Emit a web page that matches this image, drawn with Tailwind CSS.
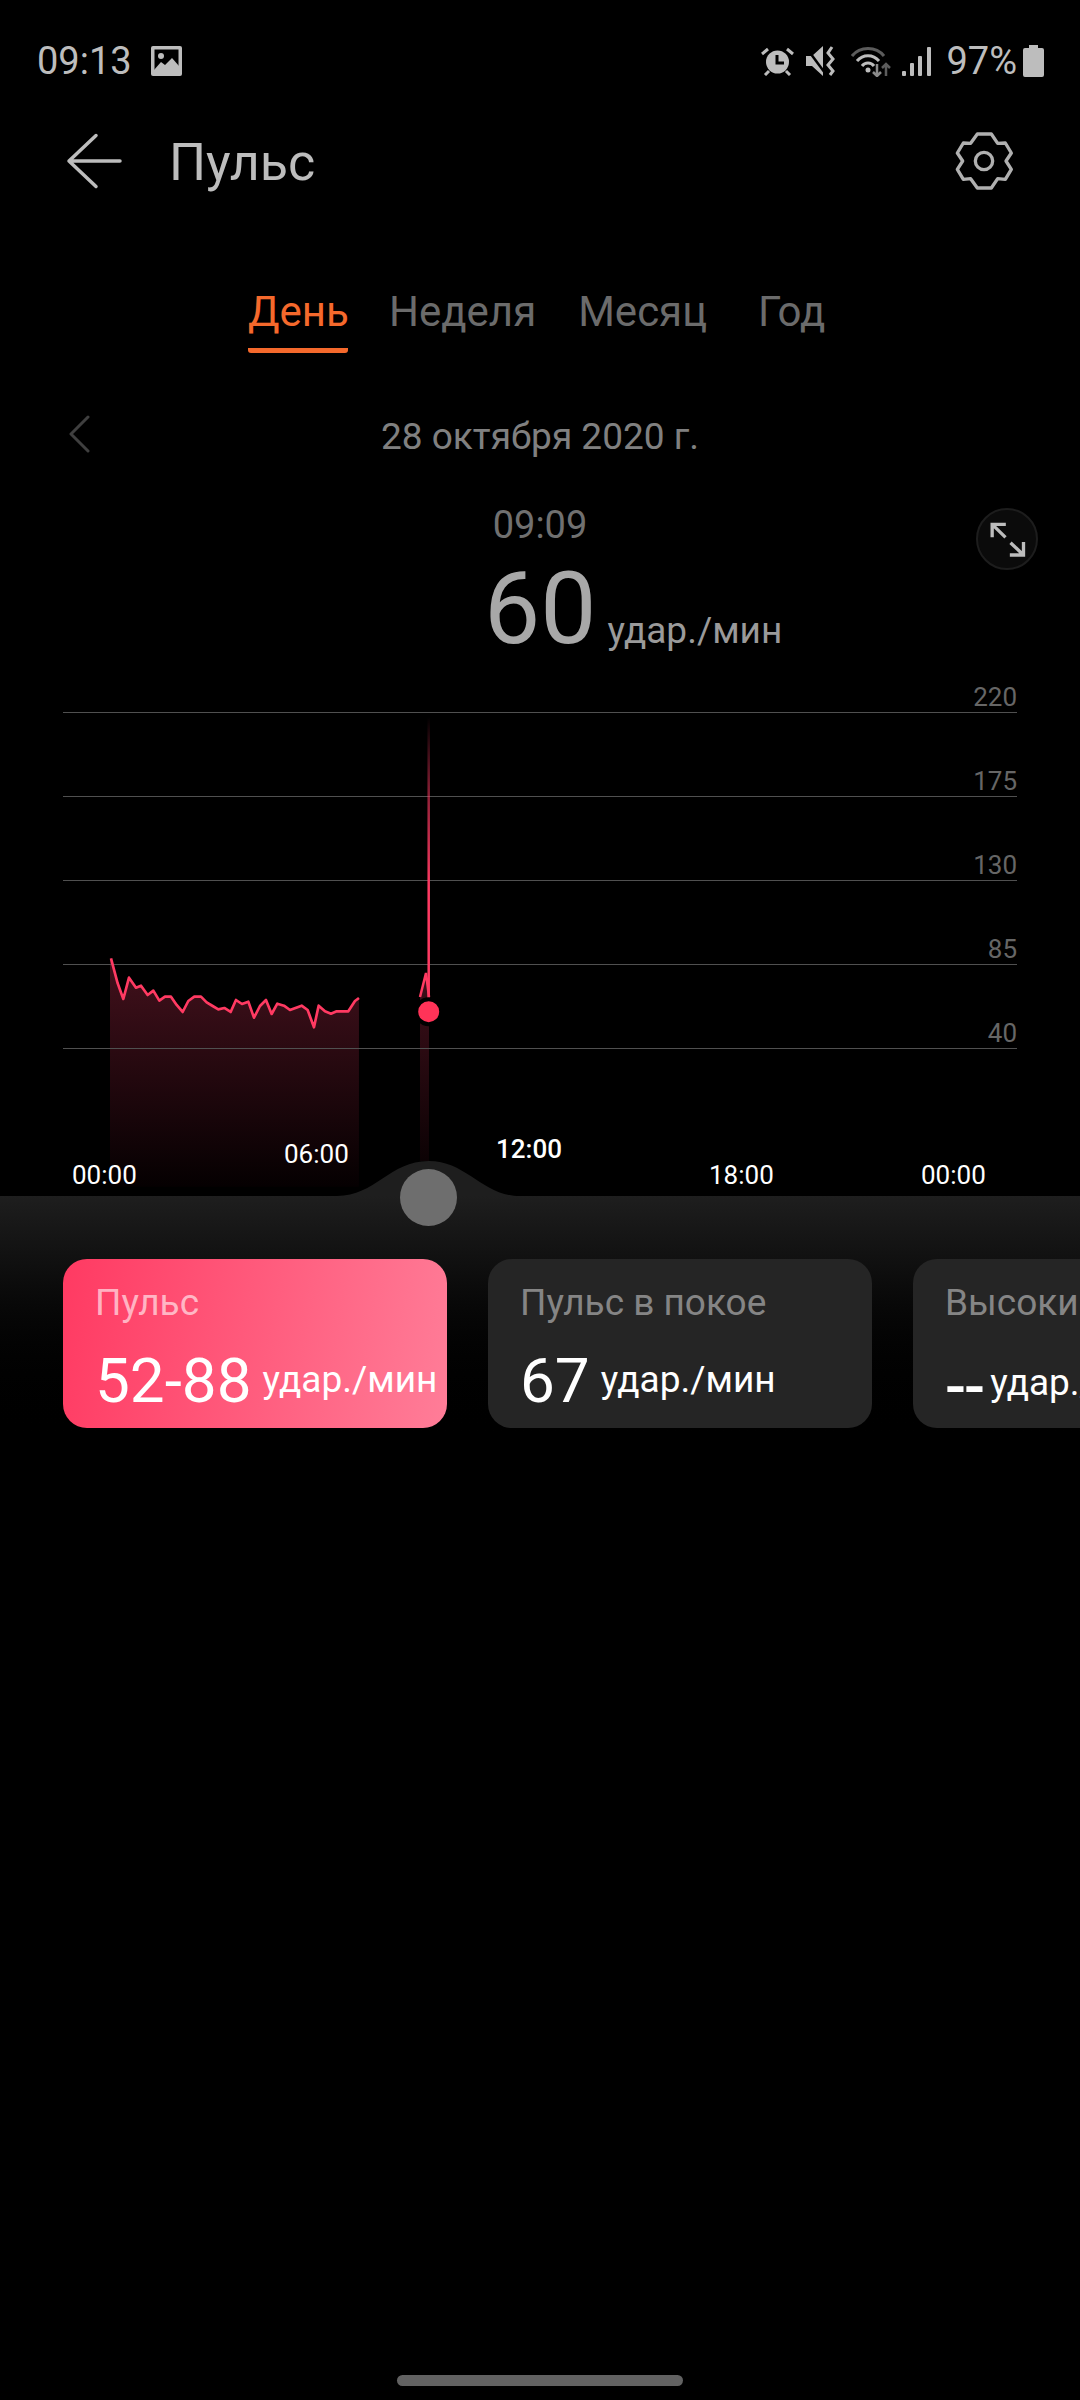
<!DOCTYPE html>
<html lang="ru">
<head>
<meta charset="utf-8">
<title>Пульс</title>
<script src="https://cdn.jsdelivr.net/npm/@tailwindcss/browser@4"></script>
</head>
<body class="bg-black">
<div class="w-[1080px] h-[2400px] overflow-hidden flex flex-col bg-black font-['Roboto',sans-serif] text-[#bdbdbd]">

    <!-- status bar -->
    <div class="h-[120px] shrink-0 flex items-center pt-[2px] pl-[37px] pr-[36px] text-[38px] leading-none">
        <span>09:13</span>
        <svg class="ml-[19px] w-[31px] h-[30px]" viewBox="0 0 31 30">
            <rect width="31" height="30" rx="2" fill="#bdbdbd"/>
            <rect x="3.500" y="3.500" width="24" height="22" fill="#000"/>
            <circle cx="10" cy="10" r="3" fill="#bdbdbd"/>
            <path d="M3 24 L10 16 L14 19 L21 12 L28 20 V26 H3 Z" fill="#bdbdbd"/>
        </svg>
        <svg class="ml-auto w-[33px] h-[30px]" viewBox="0 0 33 30" fill="none">
            <circle cx="16.500" cy="16" r="11.500" fill="#bdbdbd"/>
            <path d="M16 9 V17 H23" stroke="#000" stroke-width="3"/>
            <path d="M1 8 L7 3 M32 8 L26 3 M8 25 L4 29 M25 25 L29 29" stroke="#bdbdbd" stroke-width="3"/>
        </svg>
        <svg class="ml-[12px] w-[31px] h-[30px]" viewBox="0 0 31 30" fill="none">
            <path d="M0 10 H6 L17 0 V30 L6 20 H0 Z" fill="#bdbdbd"/>
            <path d="M-1 0 L19 27" stroke="#000" stroke-width="2.500"/>
            <path d="M26 1 L22 7 L27 13 L22 19 L27 25 L24 29" stroke="#bdbdbd" stroke-width="3"/>
        </svg>
        <svg class="ml-[14px] w-[40px] h-[32px]" viewBox="0 0 40 32" fill="none">
            <path d="M1 11 C9 1 25 1 33 11" stroke="#5c5c5c" stroke-width="3"/>
            <path d="M6 16 C12 9 22 9 28 16" stroke="#bdbdbd" stroke-width="3"/>
            <path d="M11 21 C14 17 20 17 23 21" stroke="#bdbdbd" stroke-width="3"/>
            <circle cx="17" cy="25" r="2.500" fill="#bdbdbd"/>
            <path d="M26 19 V31 M22 27 L26 31 L30 27" stroke="#8a8a8a" stroke-width="2.500"/>
            <path d="M35 31 V19 M31 23 L35 19 L39 23" stroke="#5c5c5c" stroke-width="2.500"/>
        </svg>
        <svg class="ml-[11px] w-[29px] h-[30px]" viewBox="0 0 29 30">
            <rect x="0" y="25" width="4" height="5" rx="1" fill="#bdbdbd"/>
            <rect x="8" y="17" width="4" height="13" rx="1" fill="#bdbdbd"/>
            <rect x="16" y="10" width="4" height="20" rx="1" fill="#bdbdbd"/>
            <rect x="25" y="1" width="4" height="29" rx="1" fill="#bdbdbd"/>
        </svg>
        <span class="ml-[15px]">97%</span>
        <svg class="ml-[6px] w-[21px] h-[32px]" viewBox="0 0 21 32">
            <path d="M6 0 H15 V3 H19 Q21 3 21 5 V30 Q21 32 19 32 H2 Q0 32 0 30 V5 Q0 3 2 3 H6 Z" fill="#bdbdbd"/>
        </svg>
    </div>

    <!-- header -->
    <div class="h-[82px] shrink-0 flex items-center pl-[66px] pr-[65px]">
        <svg class="w-[56px] h-[56px]" viewBox="0 0 56 56" fill="none" stroke="#bdbdbd" stroke-width="3.500" stroke-linecap="round" stroke-linejoin="round">
            <path d="M30 2.500 L3 28 L30 53.500 M3 28 H54"/>
        </svg>
        <h1 class="ml-[47px] mt-[4px] text-[52px] leading-none font-normal">Пульс</h1>
        <svg class="ml-auto w-[60px] h-[60px]" viewBox="75 35 180 180" fill="none" stroke="#b0b0b0" stroke-width="10" stroke-linejoin="round">
            <path d="M142 44 H184 L203 72 L226 71 L244 101 L228 125 L244 150 L226 180 L203 178 L184 206 H142 L122 178 L100 180 L82 150 L98 125 L82 101 L100 71 L122 72 Z"/>
            <circle cx="162" cy="125" r="26"/>
        </svg>
    </div>

    <!-- period tabs -->
    <div class="mt-[68px] h-[83px] shrink-0 flex pl-[248px] text-[42px] leading-[84px] text-[#6b6b6b]">
        <div class="w-[100px] h-[83px] border-b-[5px] border-[#f5692c] text-[#f5692c] text-center rounded-b-[3px]">День</div>
        <div class="ml-[41px]">Неделя</div>
        <div class="ml-[42px]">Месяц</div>
        <div class="ml-[51px]">Год</div>
    </div>

    <!-- date -->
    <div class="mt-[56px] h-[54px] shrink-0 relative flex items-center justify-center text-[37px] leading-none text-[#808080]">
        <svg class="absolute left-[68px] top-[6px] w-[22px] h-[38px]" viewBox="0 0 22 38" fill="none" stroke="#3f3f3f" stroke-width="3" stroke-linecap="round" stroke-linejoin="round">
            <path d="M20 2 L3 19 L20 36"/>
        </svg>
        <span>28 октября 2020 г.</span>
    </div>

    <!-- selected reading -->
    <div class="relative h-[237px] shrink-0">
        <div class="pt-[43px] text-center text-[38px] leading-[38px] text-[#707070]">09:09</div>
        <div class="mt-[15px] pl-[484px] flex items-baseline leading-[100px] text-[#a8a8a8]">
            <span class="text-[100px]">60</span>
            <span class="ml-[11px] text-[37px] text-[#9a9a9a]">удар./мин</span>
        </div>
        <div class="absolute left-[976px] top-[45px] w-[62px] h-[62px] rounded-full border-2 border-[#1d1d1d] bg-[#0b0b0b] flex items-center justify-center">
            <svg class="w-[37px] h-[35px]" viewBox="84 66 110 105" fill="none" stroke="#bdbdbd" stroke-width="10" stroke-linejoin="miter">
                <path d="M93 112 V73 H134 M93 73 L133 112"/>
                <path d="M187 126 V165 H146 M187 165 L148 128"/>
            </svg>
        </div>
    </div>

    <!-- chart -->
    <div class="relative h-[496px] shrink-0 text-[26px] leading-[26px]">
        <svg class="absolute inset-0 w-[1080px] h-[496px]" viewBox="0 700 1080 496" fill="none">
            <defs>
                <linearGradient id="areaFill" gradientUnits="userSpaceOnUse" x1="0" y1="150" x2="0" y2="800">
                    <stop offset="0" stop-color="#40101b"/>
                    <stop offset="1" stop-color="#050001"/>
                </linearGradient>
                <linearGradient id="spikeFill" gradientUnits="userSpaceOnUse" x1="0" y1="970" x2="0" y2="1186">
                    <stop offset="0" stop-color="#40101b"/>
                    <stop offset="1" stop-color="#050001"/>
                </linearGradient>
                <linearGradient id="spikeLine" gradientUnits="userSpaceOnUse" x1="0" y1="717" x2="0" y2="1000">
                    <stop offset="0" stop-color="#ff3a62" stop-opacity="0"/>
                    <stop offset="0.3" stop-color="#ff3a62" stop-opacity="0.6"/>
                    <stop offset="0.6" stop-color="#ff3a62"/>
                    <stop offset="1" stop-color="#ff3a62"/>
                </linearGradient>
            </defs>
            <g transform="translate(40 920) scale(0.3333)">
                <path fill="url(#areaFill)" d="M210 115 L213 115 L233 190 L250 237 L267 173 L288 203 L303 197 L323 225 L340 212 L358 242 L375 230 L393 230 L410 255 L428 276 L445 243 L463 230 L483 230 L500 247 L518 258 L535 268 L553 264 L572 276 L588 240 L606 252 L625 245 L642 293 L660 258 L678 240 L695 282 L712 251 L732 257 L750 270 L785 257 L803 270 L822 322 L836 257 L855 274 L873 281 L890 274 L925 274 L945 243 L957 234 V800 H210 Z"/>
            </g>
            <path fill="url(#spikeFill)" d="M420 997 L426 973 L429 997 V1161 H420 Z"/>
            <g stroke="#505050" stroke-width="1">
                <path d="M63 712.500 H1017"/>
                <path d="M63 796.500 H1017"/>
                <path d="M63 880.500 H1017"/>
                <path d="M63 964.500 H1017"/>
                <path d="M63 1048.500 H1017"/>
            </g>
            <g transform="translate(40 920) scale(0.3333)">
                <path stroke="#ff3a62" stroke-width="8" stroke-linejoin="round" d="M213 115 L233 190 L250 237 L267 173 L288 203 L303 197 L323 225 L340 212 L358 242 L375 230 L393 230 L410 255 L428 276 L445 243 L463 230 L483 230 L500 247 L518 258 L535 268 L553 264 L572 276 L588 240 L606 252 L625 245 L642 293 L660 258 L678 240 L695 282 L712 251 L732 257 L750 270 L785 257 L803 270 L822 322 L836 257 L855 274 L873 281 L890 274 L925 274 L945 243 L957 234"/>
            </g>
            <path stroke="#ff3a62" stroke-width="2.500" d="M420 997 L426 973 L429 997"/>
            <path stroke="url(#spikeLine)" stroke-width="2.500" d="M428.700 717 V1000"/>
            <circle cx="428.700" cy="1011.700" r="12.500" fill="#ff3358" stroke="#000" stroke-width="4"/>
            <path fill="#1e1e1e" d="M337 1196 C375 1196 390 1161 428.700 1161 C467 1161 482 1196 520 1196 Z"/>
        </svg>

        <span class="absolute right-[63px] top-[-16px] text-[#666]">220</span>
        <span class="absolute right-[63px] top-[68px] text-[#666]">175</span>
        <span class="absolute right-[63px] top-[152px] text-[#666]">130</span>
        <span class="absolute right-[63px] top-[236px] text-[#666]">85</span>
        <span class="absolute right-[63px] top-[320px] text-[#666]">40</span>

        <span class="absolute left-[72px] top-[462px] text-white">00:00</span>
        <span class="absolute left-[284px] top-[441px] text-white">06:00</span>
        <span class="absolute left-[496px] top-[436px] text-white font-medium">12:00</span>
        <span class="absolute left-[709px] top-[462px] text-white">18:00</span>
        <span class="absolute left-[921px] top-[462px] text-white">00:00</span>
    </div>

    <!-- summary cards -->
    <div class="relative h-[250px] shrink-0 bg-gradient-to-b from-[#1e1e1e] to-[#000] pt-[63px] pl-[63px] flex gap-[41px]">
        <div class="absolute left-[400px] top-[-27px] w-[57px] h-[57px] rounded-full bg-[#6e6e6e]"></div>

        <div class="w-[384px] h-[169px] shrink-0 rounded-[24px] bg-[linear-gradient(100deg,#ff3a62,#ff7d98)] pl-[32px] pt-[24px] text-white">
            <div class="text-[37px] leading-[40px] text-white/60">Пульс</div>
            <div class="mt-[27px] flex items-center leading-[62px]">
                <span class="text-[62px]">52-88</span>
                <span class="ml-[11px] -mt-[2px] text-[37px]">удар./мин</span>
            </div>
        </div>

        <div class="w-[384px] h-[169px] shrink-0 rounded-[24px] bg-[#252525] pl-[32px] pt-[24px] text-white">
            <div class="text-[37px] leading-[40px] text-[#858585]">Пульс в покое</div>
            <div class="mt-[27px] flex items-center leading-[62px]">
                <span class="text-[62px]">67</span>
                <span class="ml-[11px] -mt-[2px] text-[37px]">удар./мин</span>
            </div>
        </div>

        <div class="w-[384px] h-[169px] shrink-0 rounded-[24px] bg-[#252525] pl-[32px] pt-[24px] text-white whitespace-nowrap">
            <div class="text-[37px] leading-[40px] text-[#858585]">Высокий пульс</div>
            <div class="mt-[27px] flex items-center leading-[62px]">
                <span class="mt-[6px] text-[62px] font-medium tracking-[-2px]">--</span>
                <span class="ml-[7px] -mt-[2px] text-[37px]">удар./мин</span>
            </div>
        </div>
    </div>

    <!-- home indicator -->
    <div class="mt-auto mb-[14px] mx-auto w-[286px] h-[11px] rounded-full bg-[#626262]"></div>
</div>
</body>
</html>
